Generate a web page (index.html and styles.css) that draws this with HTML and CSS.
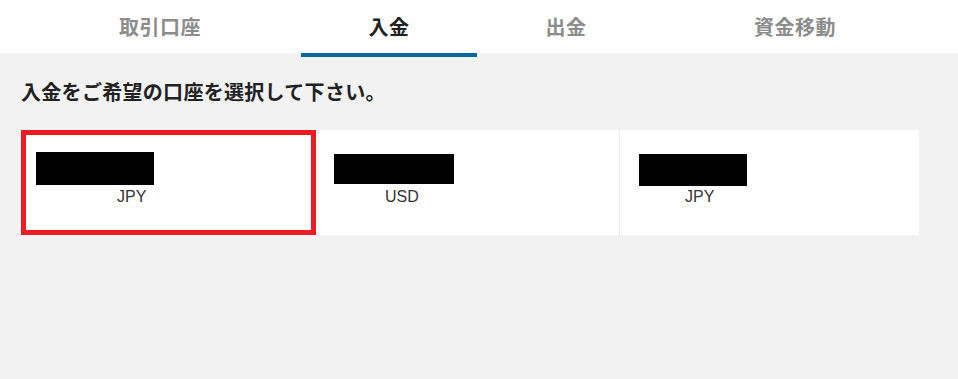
FILE: index.html
```html
<!DOCTYPE html>
<html lang="ja">
<head>
<meta charset="utf-8">
<title>入金</title>
<link rel="stylesheet" href="styles.css">
</head>
<body>
<nav class="tabs">
  <a class="tab tab-1">取引口座</a>
  <a class="tab tab-2 is-active">入金</a>
  <a class="tab tab-3">出金</a>
  <a class="tab tab-4">資金移動</a>
</nav>
<main class="content">
  <h1 class="title">入金をご希望の口座を選択して下さい。</h1>
  <div class="accounts">
    <div class="account account-1 is-selected">
      <div class="name-row"><span class="redact redact-1"></span></div>
      <div class="currency">JPY</div>
    </div>
    <div class="account account-2">
      <div class="name-row"><span class="redact redact-2"></span></div>
      <div class="currency">USD</div>
    </div>
    <div class="account account-3">
      <div class="name-row"><span class="redact redact-3"></span></div>
      <div class="currency">JPY</div>
    </div>
  </div>
</main>
</body>
</html>
```

FILE: styles.css
```css
*, *::before, *::after { box-sizing: border-box; }
html, body { margin: 0; padding: 0; }
body {
  background: #f2f2f2;
  font-family: "Noto Sans CJK JP", "Noto Sans", sans-serif;
  color: #222;
  width: 958px;
  height: 379px;
  overflow: hidden;
}
.tabs {
  display: flex;
  height: 53px;
  background: #fff;
  padding-left: 19px;
}
.tab {
  position: relative;
  display: block;
  text-align: center;
  font-size: 20px;
  font-weight: 700;
  line-height: 53px;
  color: #8c8c8c;
  letter-spacing: 0.5px;
}
.tab-1 { width: 282px; }
.tab-2 { width: 176px; }
.tab-3 { width: 178px; }
.tab-4 { width: 280px; }
.tab.is-active { color: #222; }
.tab.is-active::after {
  content: "";
  position: absolute;
  left: 0;
  right: 0;
  bottom: -4px;
  height: 4px;
  background: #00699b;
}
.content {
  padding: 0 0 0 21px;
}
.title {
  margin: 0;
  padding-top: 24px;
  font-size: 20px;
  font-weight: 700;
  line-height: 29px;
  letter-spacing: 0.3px;
  color: #222;
}
.accounts {
  display: grid;
  grid-template-columns: 297px 301px 300px;
  margin-top: 24px;
  width: 898px;
}
.account {
  position: relative;
  height: 105px;
  background: #fff;
  padding-top: 22px;
}
.account-2, .account-3 { border-left: 1px solid #ebebeb; }
.account.is-selected::after {
  content: "";
  position: absolute;
  left: 0;
  top: 0;
  width: 295px;
  height: 105px;
  border: 5px solid #ed1c24;
}
.name-row { display: flow-root; height: 36px; }
.redact { display: block; background: #000; }
.redact-1 { margin-left: 15px; width: 118px; height: 33px; }
.redact-2 { margin-left: 15px; margin-top: 2px; width: 120px; height: 30px; }
.redact-3 { margin-left: 19px; margin-top: 2px; width: 108px; height: 32px; }
.currency {
  font-family: "Liberation Sans", Arial, sans-serif;
  font-size: 16px;
  line-height: 18px;
  color: #333;
}
.account-1 .currency { padding-left: 96px; }
.account-2 .currency { padding-left: 66px; }
.account-3 .currency { padding-left: 65px; }
```
